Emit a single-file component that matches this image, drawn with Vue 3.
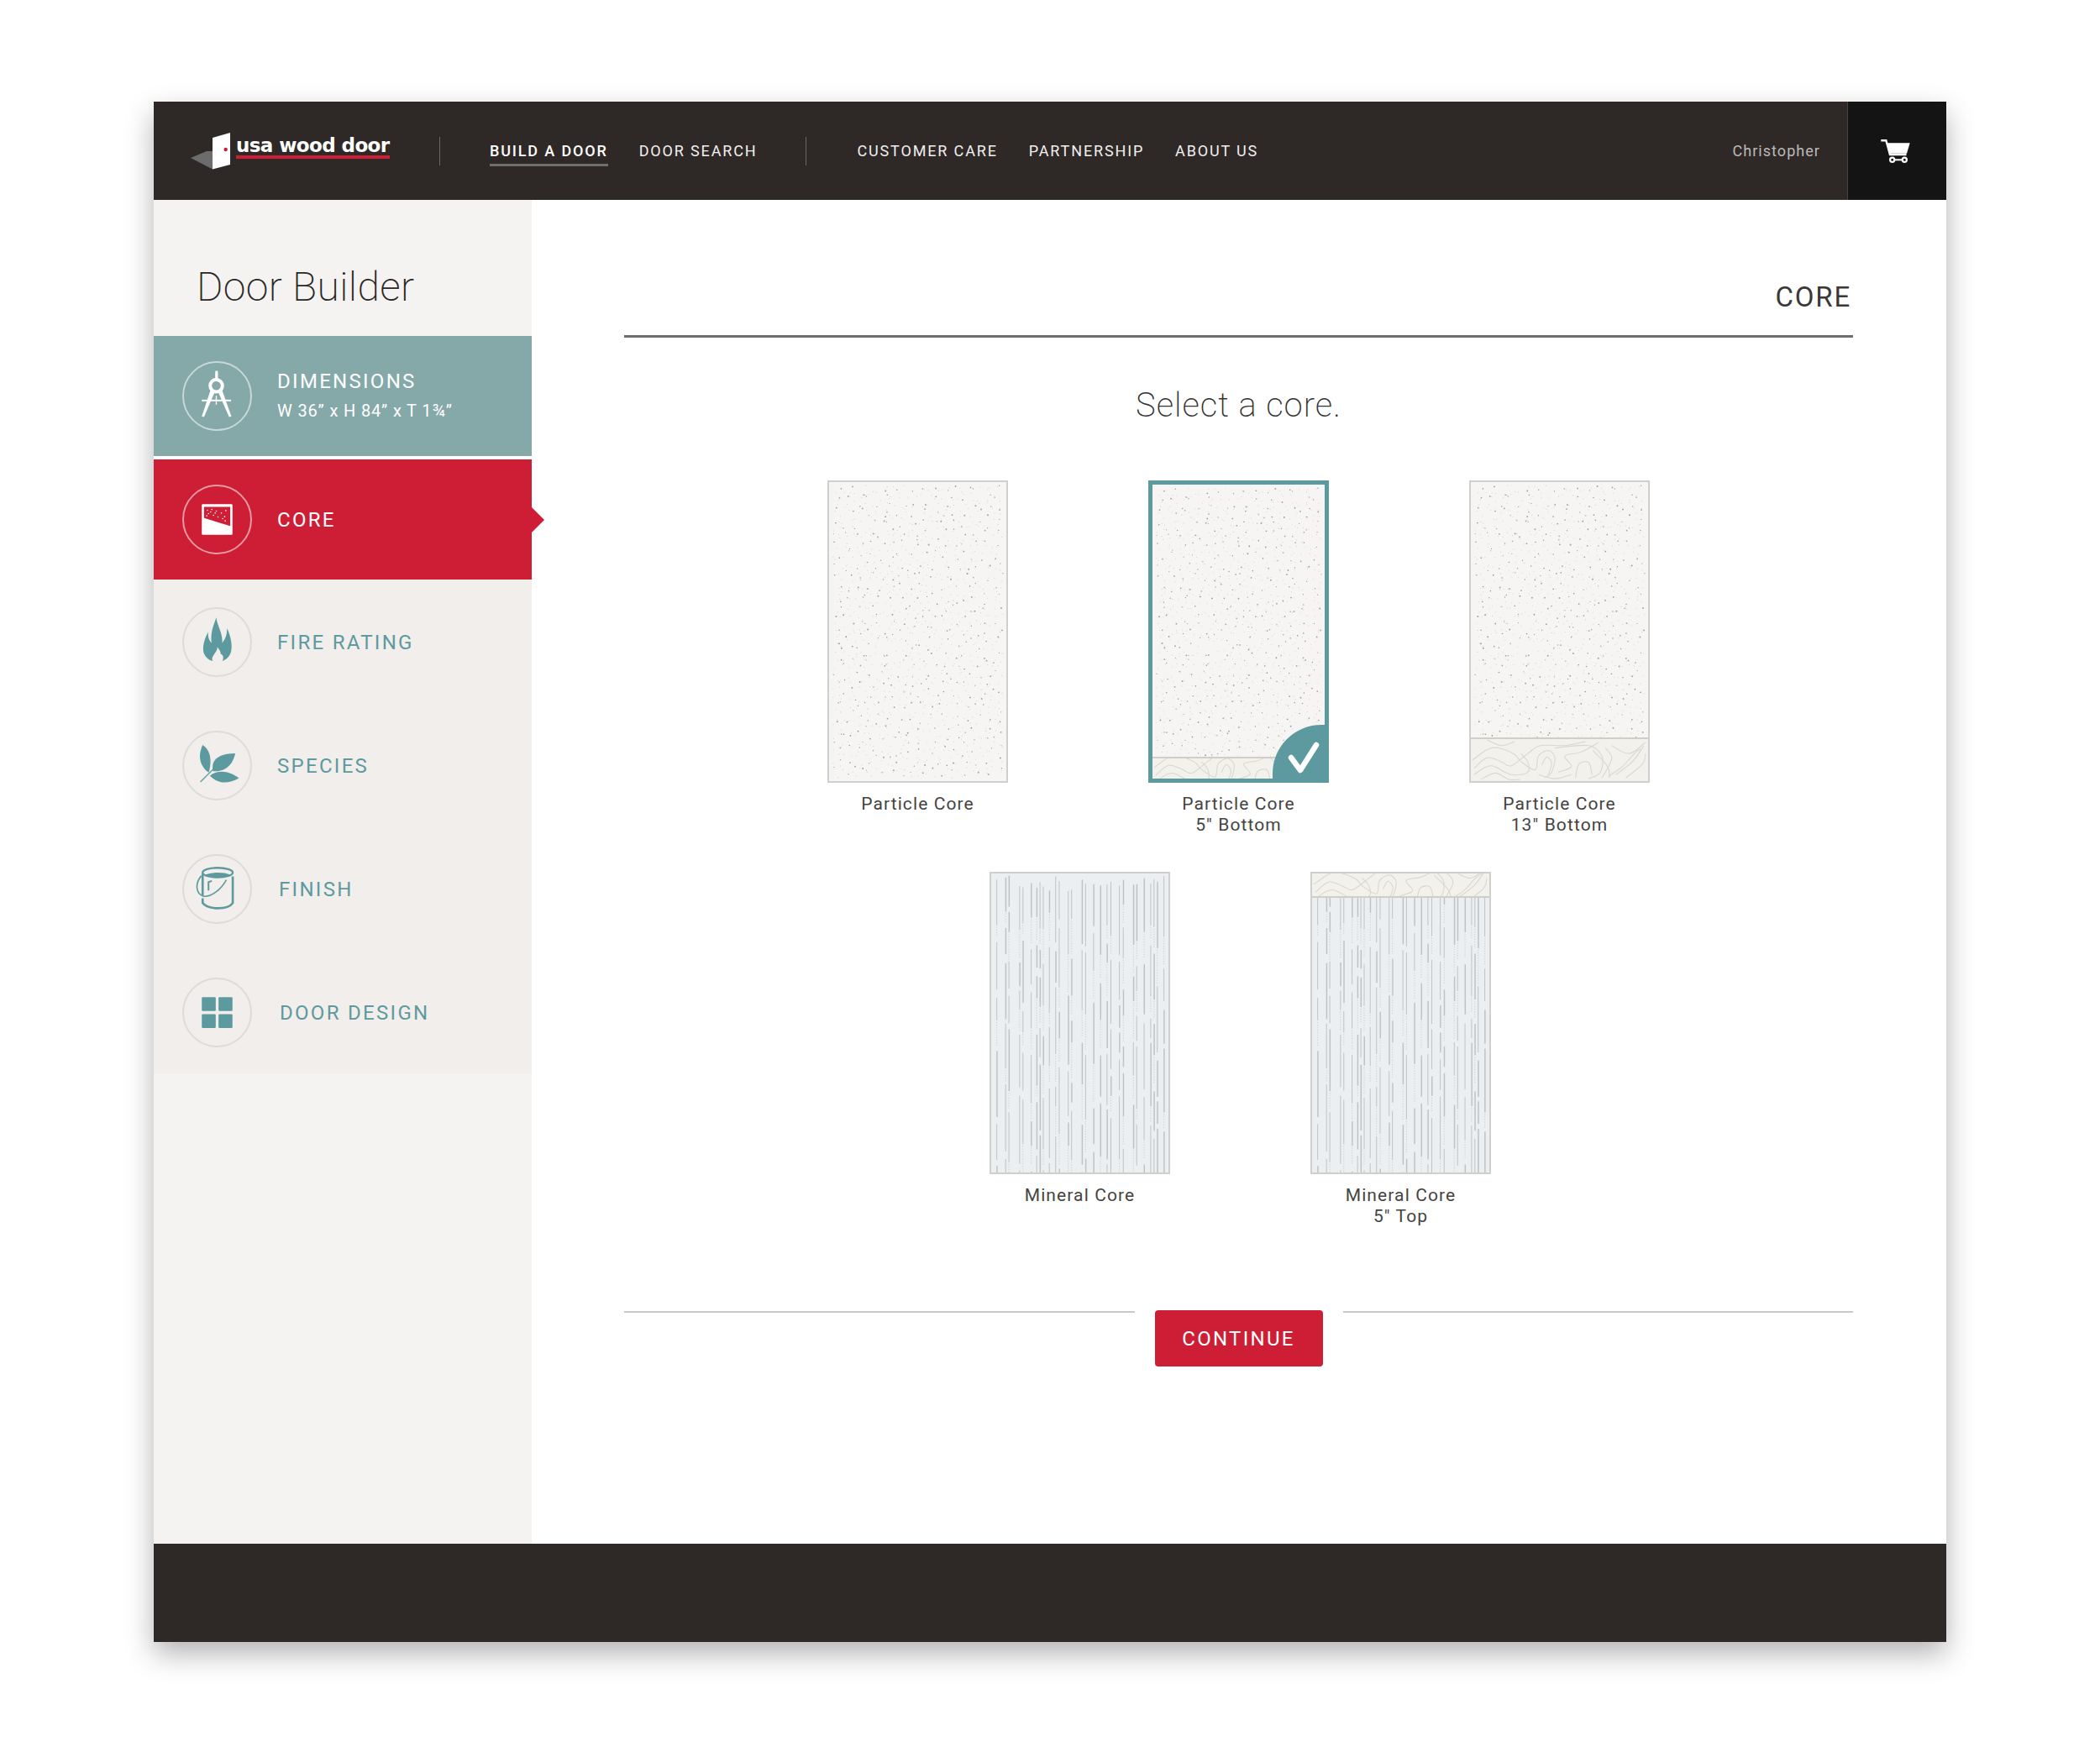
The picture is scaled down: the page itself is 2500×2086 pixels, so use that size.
<script setup>
function rng(seed) {
  let s = seed
  return () => {
    s = (s * 1664525 + 1013904223) % 4294967296
    return s / 4294967296
  }
}

function scatter(r, cols, rowsCount) {
  const out = []
  const cw = 207 / cols
  const ch = 352 / rowsCount
  for (let a = 0; a < cols; a++) {
    for (let b = 0; b < rowsCount; b++) {
      r()
      const jx = r()
      r()
      const jy = r()
      out.push({ x: 4 + (a + jx) * cw, y: 4 + (b + jy) * ch, r: 0.6 + r() * 0.4 })
    }
  }
  return out
}

const speckle = (() => {
  const r = rng(17)
  return { big: scatter(r, 16, 27), small: scatter(r, 24, 36) }
})()

const mineralColumns = [6.3, 17, 21, 34, 38, 48, 54.7, 58.7, 62.7, 70, 77.7, 82, 93, 97, 109.7, 114, 123.7, 132, 140, 144.7, 155, 159.7, 172, 176, 185, 193, 197, 201, 209]

const mineral = (() => {
  const r = rng(91)
  const solid = []
  const dots = []
  for (const x of mineralColumns) {
    let y = 2 + r() * 20
    while (y < 360) {
      const h = 22 + r() * 62
      solid.push({ x, y, h, w: r() > 0.5 ? 1.5 : 1 })
      y += h + 2
      const run = r() < 0.55 ? 10 + r() * 34 : 0
      for (let d = 0; d < run; d += 3) dots.push({ x, y: y + d })
      y += run + 3 + r() * 6
    }
  }
  return { solid, dots }
})()

function smooth(points) {
  let d = `M${points[0][0]} ${points[0][1]}`
  for (let i = 0; i < points.length - 1; i++) {
    const p0 = points[i - 1] || points[i]
    const p1 = points[i]
    const p2 = points[i + 1]
    const p3 = points[i + 2] || p2
    const c1x = p1[0] + (p2[0] - p0[0]) / 6
    const c1y = p1[1] + (p2[1] - p0[1]) / 6
    const c2x = p2[0] - (p3[0] - p1[0]) / 6
    const c2y = p2[1] - (p3[1] - p1[1]) / 6
    d += `C${c1x.toFixed(1)} ${c1y.toFixed(1)} ${c2x.toFixed(1)} ${c2y.toFixed(1)} ${p2[0]} ${p2[1]}`
  }
  return d
}

const contourPoints = [
  [[2, 26], [20, 13], [33, 11], [53, 19], [61, 28], [78, 38], [82, 21], [94, 14], [102, 23], [98, 41], [90, 48]],
  [[4, 36], [20, 23], [37, 28], [49, 33], [69, 18], [84, 8], [114, 8], [139, 3]],
  [[4, 44], [24, 33], [49, 44], [69, 41], [69, 28], [61, 18]],
  [[20, 1], [37, 8], [53, 3]],
  [[127, 48], [131, 31], [143, 29], [147, 44]],
  [[102, 11], [143, 8], [159, 21], [157, 41], [143, 49]],
  [[163, 11], [171, 24], [159, 48]],
  [[176, 44], [196, 28], [210, 8]],
  [[188, 48], [208, 31], [212, 18]],
  [[171, 8], [192, 18], [212, 4]],
  [[106, 41], [122, 34], [114, 21], [134, 16], [155, 4]],
  [[82, 44], [102, 49], [122, 44]],
  [[12, 50], [30, 42], [46, 50], [60, 50]],
  [[167, 46], [184, 34], [198, 18], [206, 12]],
  [[86, 32], [92, 22], [98, 30], [94, 44]],
  [[148, 14], [166, 34], [168, 48]],
]
const contours = contourPoints.map(smooth)

const rows = [
  [
    { id: 1, kind: 'particle', strip: 0, lines: ['Particle Core'] },
    { id: 2, kind: 'particle', strip: 26, stripY: 14, stripBottom: true, selected: true, lines: ['Particle Core', '5" Bottom'] },
    { id: 3, kind: 'particle', strip: 52, stripY: 0, stripBottom: true, lines: ['Particle Core', '13" Bottom'] },
  ],
  [
    { id: 4, kind: 'mineral', strip: 0, lines: ['Mineral Core'] },
    { id: 5, kind: 'mineral', strip: 29, stripY: 12, stripBottom: false, lines: ['Mineral Core', '5" Top'] },
  ],
]

const coreDots = [[200, 622], [216, 619], [232, 625], [250, 632], [266, 623], [204, 634], [222, 640], [238, 646], [262, 645], [212, 628], [198, 642], [255, 652], [264, 660], [228, 632]]
</script>

<template>
  <div class="page">
    <div class="window">
      <header class="topbar">
        <a class="logo">
          <svg class="logo-mark" width="48" height="44" viewBox="0 0 48 44">
            <polygon points="0,30 19,22 26,22 26,43.500" fill="#6c6c6c" />
            <polygon points="26,6 47,0 47,38 26,43.500" fill="#fff" />
            <circle cx="41.700" cy="20" r="2.200" fill="#ce1e35" />
          </svg>
          <span class="logo-word">usa wood door</span>
        </a>
        <span class="divider first"></span>
        <nav class="nav-group primary">
          <a class="nav-link active">BUILD A DOOR</a>
          <a class="nav-link">DOOR SEARCH</a>
        </nav>
        <span class="divider second"></span>
        <nav class="nav-group">
          <a class="nav-link">CUSTOMER CARE</a>
          <a class="nav-link">PARTNERSHIP</a>
          <a class="nav-link">ABOUT US</a>
        </nav>
        <span class="user">Christopher</span>
        <div class="cart">
          <svg width="40" height="30" viewBox="0 0 40 30">
            <path d="M2.300 2.200H8.300L13 19H32.500" fill="none" stroke="#fff" stroke-width="2.400" />
            <polygon points="9,5.300 36.700,5.300 33,17.700 11.700,17.700" fill="#fff" />
            <path d="M15.700 25.300H30.300" stroke="#fff" stroke-width="2" />
            <circle cx="15.700" cy="25.300" r="2.600" fill="#141414" stroke="#fff" stroke-width="2.200" />
            <circle cx="30.300" cy="25.300" r="2.600" fill="#141414" stroke="#fff" stroke-width="2.200" />
          </svg>
        </div>
      </header>

      <div class="body">
        <aside class="sidebar">
          <h1 class="side-title">Door Builder</h1>
          <ul class="steps">
            <li class="step done">
              <span class="disc">
                <svg viewBox="110 90 250 250" class="disc-icon">
                  <rect x="228" y="125" width="10" height="34" rx="4" fill="#fff" />
                  <circle cx="232" cy="178" r="22" fill="none" stroke="#fff" stroke-width="12" />
                  <polygon points="212,192 227,199 188,290 180,288" fill="#fff" />
                  <polygon points="252,192 238,199 278,290 286,288" fill="#fff" />
                  <rect x="180" y="228" width="105" height="6" fill="#fff" />
                  <rect x="230" y="214" width="4" height="32" fill="#fff" />
                </svg>
              </span>
              <div class="step-text">
                <span class="step-name">DIMENSIONS</span>
                <span class="step-sub">W 36” x H 84” x T 1¾”</span>
              </div>
            </li>
            <li class="step current">
              <span class="disc">
                <svg viewBox="110 530 250 250" class="disc-icon">
                  <rect x="180" y="600" width="110" height="110" rx="4" fill="#fff" />
                  <polygon points="188,610 282,610 282,678 188,650" fill="#ce1e35" />
                  <circle v-for="(d, i) in coreDots" :key="i" :cx="d[0]" :cy="d[1]" r="2.500" fill="#fff" />
                </svg>
              </span>
              <div class="step-text"><span class="step-name">CORE</span></div>
            </li>
            <li class="step idle">
              <span class="disc">
                <svg viewBox="110 970 250 250" class="disc-icon">
                  <path d="M232 1007C236 1040 256 1062 253 1098 264 1086 272 1066 270 1045 286 1075 291 1115 283 1135 277 1150 266 1158 254 1163 260 1150 256 1140 248 1138 248 1128 242 1122 236 1112 236 1128 224 1135 219 1148 216 1154 217 1160 220 1163 204 1160 190 1148 186 1130 182 1110 190 1082 203 1058 201 1076 206 1090 215 1098 210 1060 222 1035 232 1007Z" fill="#5d9a9f" />
                </svg>
              </span>
              <div class="step-text"><span class="step-name">FIRE RATING</span></div>
            </li>
            <li class="step idle">
              <span class="disc">
                <svg viewBox="110 150 250 250" class="disc-icon">
                  <path d="M183 201C205 215 220 245 205 300 182 285 160 250 183 201Z" fill="#5d9a9f" />
                  <path d="M300 231C292 268 268 298 220 295 212 255 238 232 300 231Z" fill="#5d9a9f" />
                  <path d="M209 312C240 285 285 298 313 320 275 342 240 342 209 312Z" fill="#5d9a9f" />
                  <path d="M175 334L237 272" stroke="#5d9a9f" stroke-width="4" fill="none" />
                </svg>
              </span>
              <div class="step-text"><span class="step-name">SPECIES</span></div>
            </li>
            <li class="step idle">
              <span class="disc">
                <svg viewBox="110 590 250 250" class="disc-icon">
                  <ellipse cx="237" cy="656" rx="54" ry="17" fill="none" stroke="#5d9a9f" stroke-width="7" />
                  <path d="M192 664C215 654 262 654 282 664 262 676 212 676 192 664Z" fill="#5d9a9f" />
                  <path d="M183 660V738M183 748V765C200 790 275 790 291 765V670" fill="none" stroke="#5d9a9f" stroke-width="8" />
                  <path d="M178 668C155 695 158 732 186 741 215 745 250 715 268 682" fill="none" stroke="#5d9a9f" stroke-width="5" />
                  <path d="M204 720V690L216 686" fill="none" stroke="#5d9a9f" stroke-width="6" />
                </svg>
              </span>
              <div class="step-text offset-a"><span class="step-name">FINISH</span></div>
            </li>
            <li class="step idle">
              <span class="disc">
                <svg viewBox="110 1030 250 250" class="disc-icon">
                  <rect x="180" y="1100" width="50" height="50" rx="4" fill="#5d9a9f" />
                  <rect x="240" y="1100" width="50" height="50" rx="4" fill="#5d9a9f" />
                  <rect x="180" y="1161" width="50" height="50" rx="4" fill="#5d9a9f" />
                  <rect x="240" y="1161" width="50" height="50" rx="4" fill="#5d9a9f" />
                </svg>
              </span>
              <div class="step-text offset-b"><span class="step-name">DOOR DESIGN</span></div>
            </li>
          </ul>
        </aside>

        <main class="content">
          <div class="heading"><h2>CORE</h2></div>
          <p class="prompt">Select a core.</p>
          <div class="choices">
            <div v-for="(row, ri) in rows" :key="ri" class="choice-row" :class="{ lower: ri === 1 }">
              <div v-for="c in row" :key="c.id" class="choice">
                <div class="swatch" :class="[c.kind, { selected: c.selected }]">
                  <svg class="texture" viewBox="0 0 215 360" preserveAspectRatio="none">
                    <template v-if="c.kind === 'particle'">
                      <circle v-for="(d, i) in speckle.small" :key="'s' + i" :cx="d.x" :cy="d.y" r="0.550" fill="#cfcfcd" />
                      <circle v-for="(d, i) in speckle.big" :key="'b' + i" :cx="d.x" :cy="d.y" :r="d.r" fill="#a0a0a0" />
                    </template>
                    <template v-else>
                      <rect v-for="(d, i) in mineral.dots" :key="'d' + i" :x="d.x" :y="d.y" width="1" height="1.400" fill="#cdd0d2" />
                      <rect v-for="(d, i) in mineral.solid" :key="'m' + i" :x="d.x" :y="d.y" :width="d.w" :height="d.h" fill="#bfc2c4" />
                    </template>
                  </svg>
                  <div v-if="c.strip" class="strip" :class="c.stripBottom ? 'at-bottom' : 'at-top'" :style="{ height: c.strip + 'px' }">
                    <svg class="topo" :viewBox="`0 ${c.stripY} 215 ${c.strip}`" preserveAspectRatio="none">
                      <path v-for="(p, i) in contours" :key="i" :d="p" fill="none" stroke="#d8d7d0" stroke-width="1.100" />
                    </svg>
                  </div>
                  <div v-if="c.selected" class="badge">
                    <svg width="62" height="64" viewBox="0 0 62 64">
                      <path d="M22 39L33 54 52 24" fill="none" stroke="#fff" stroke-width="6.500" stroke-linecap="round" stroke-linejoin="round" />
                    </svg>
                  </div>
                </div>
                <div class="choice-label">
                  <span v-for="l in c.lines" :key="l">{{ l }}</span>
                </div>
              </div>
            </div>
          </div>
          <div class="actions">
            <span class="rule"></span>
            <button class="continue" type="button">CONTINUE</button>
            <span class="rule"></span>
          </div>
        </main>
      </div>

      <footer class="footer"></footer>
    </div>
  </div>
</template>

<style scoped>
.page {
  width: 2500px;
  height: 2086px;
  padding: 121px 183px 0;
  box-sizing: border-box;
  background: #fff;
  font-family: Roboto, "Liberation Sans", sans-serif;
}
.window {
  width: 2134px;
  height: 1834px;
  display: flex;
  flex-direction: column;
  box-shadow: 0 14px 32px rgba(0, 0, 0, 0.3);
  background: #fff;
}
.topbar {
  height: 117px;
  flex: none;
  background: #2e2926;
  display: flex;
  align-items: center;
  color: #fff;
}
.logo {
  display: block;
  margin-left: 44px;
  width: 296px;
  height: 44px;
  position: relative;
}
.logo-mark { display: block; }
.logo-word {
  position: absolute;
  left: 54px;
  top: 4px;
  font-family: "DejaVu Sans", "Liberation Sans", sans-serif;
  font-weight: 700;
  font-size: 23px;
  line-height: 23px;
  letter-spacing: -0.6px;
  white-space: nowrap;
  border-bottom: 4px solid #ce1e35;
  color: #fff;
}
.divider {
  width: 1px;
  height: 34px;
  background: #6b6764;
  flex: none;
}
.divider.first { margin-right: 59px; }
.divider.second { margin: 0 60px 0 58px; }
.nav-group {
  display: flex;
  gap: 37px;
}
.nav-link {
  font-size: 18px;
  letter-spacing: 1.85px;
  line-height: 22px;
  white-space: nowrap;
  color: #f1f0ee;
  position: relative;
}
.nav-link.active { font-weight: 500; color: #fff; }
.nav-link.active::after {
  content: "";
  position: absolute;
  left: 0;
  right: 0;
  bottom: -7px;
  height: 3px;
  background: #6f6f6f;
}
.user {
  margin-left: auto;
  margin-right: 32px;
  font-size: 18px;
  letter-spacing: 1.05px;
  color: #bbb9b7;
}
.cart {
  width: 118px;
  height: 117px;
  flex: none;
  background: #141414;
  border-left: 1px solid #45413e;
  box-sizing: border-box;
  display: flex;
  align-items: center;
  justify-content: center;
  padding-right: 4px;
}

.body {
  flex: 1;
  display: flex;
  min-height: 0;
}
.sidebar {
  width: 450px;
  flex: none;
  background: #f4f3f1;
}
.side-title {
  margin: 0;
  height: 162px;
  box-sizing: border-box;
  padding: 76px 0 0 51px;
  font-size: 48px;
  line-height: 56px;
  font-weight: 200;
  letter-spacing: 0.35px;
  color: #2a2725;
}
.steps {
  list-style: none;
  margin: 0;
  padding: 0;
  background: #f1eeeb;
}
.step {
  height: 147px;
  display: flex;
  align-items: center;
  padding-left: 34px;
  box-sizing: border-box;
  gap: 30px;
  color: #5d9a9f;
  position: relative;
}
.step.idle { padding-top: 2px; }
.step.done {
  background: #85a8a9;
  color: #fff;
  height: 143px;
  margin-bottom: 4px;
  box-shadow: 0 4px 0 #fff;
}
.step.current {
  background: #ce1e35;
  color: #fff;
  height: 143px;
}
.step.current::after {
  content: "";
  position: absolute;
  left: 100%;
  top: 50%;
  margin-top: -15px;
  border-left: 15px solid #ce1e35;
  border-top: 15px solid transparent;
  border-bottom: 15px solid transparent;
}
.disc {
  width: 83px;
  height: 83px;
  border-radius: 50%;
  border: 2px solid #dcdcda;
  box-sizing: border-box;
  flex: none;
  position: relative;
}
.done .disc, .current .disc { border-color: rgba(255, 255, 255, 0.55); }
.disc-icon {
  position: absolute;
  left: -2px;
  top: -2px;
  width: 83px;
  height: 83px;
}
.step-text {
  display: flex;
  flex-direction: column;
}
.offset-a { margin-left: 2px; }
.offset-b { margin-left: 3px; }
.step-name {
  font-size: 24px;
  line-height: 30px;
  letter-spacing: 2.3px;
  white-space: nowrap;
}
.step-sub {
  margin-top: 5px;
  font-size: 20px;
  line-height: 30px;
  letter-spacing: 0.85px;
  white-space: nowrap;
}

.content {
  flex: 1;
  min-width: 0;
  padding: 0 111px 0 110px;
  display: flex;
  flex-direction: column;
}
.heading {
  height: 164px;
  flex: none;
  box-sizing: border-box;
  border-bottom: 3px solid #6d6d6d;
  display: flex;
  justify-content: flex-end;
  align-items: flex-end;
  padding: 0 2px 25px 0;
}
.heading h2 {
  margin: 0;
  font-size: 33px;
  line-height: 40px;
  font-weight: 400;
  letter-spacing: 1.8px;
  color: #3b3836;
}
.prompt {
  margin: 0;
  padding-top: 57px;
  text-align: center;
  font-size: 40px;
  line-height: 48px;
  font-weight: 200;
  letter-spacing: 0.95px;
  color: #333;
}
.choices {
  margin-top: 65px;
  display: flex;
  flex-direction: column;
  gap: 43px;
}
.choice-row {
  display: flex;
  justify-content: center;
  height: 423px;
}
.choice-row.lower { padding-left: 4px; }
.choice {
  width: 382px;
  display: flex;
  flex-direction: column;
  align-items: center;
}
.swatch {
  width: 215px;
  height: 360px;
  box-sizing: border-box;
  position: relative;
  border: 2px solid #cfcfcc;
  overflow: hidden;
  flex: none;
}
.swatch.particle { background: #f6f5f3; }
.swatch.mineral { background: #eceff1; }
.swatch.selected { border: 5px solid #5d9a9f; }
.texture {
  position: absolute;
  inset: 0;
  width: 100%;
  height: 100%;
}
.strip {
  position: absolute;
  left: 0;
  right: 0;
  background: #f2f1ec;
  box-sizing: border-box;
}
.strip.at-bottom { bottom: 0; border-top: 2px solid #cfcfc8; }
.strip.at-top { top: 0; border-bottom: 2px solid #cfcfc8; }
.topo {
  display: block;
  width: 100%;
  height: 100%;
}
.badge {
  position: absolute;
  right: 0;
  bottom: 0;
  width: 62px;
  height: 64px;
  background: #5d9a9f;
  border-top-left-radius: 58px;
}
.badge svg { display: block; }
.choice-label {
  margin-top: 13px;
  display: flex;
  flex-direction: column;
  align-items: center;
  font-size: 21px;
  line-height: 25px;
  letter-spacing: 1.1px;
  color: #454341;
  white-space: nowrap;
}
.actions {
  margin-top: 99px;
  display: flex;
  align-items: flex-start;
  gap: 24px;
}
.rule {
  flex: 1;
  height: 2px;
  margin-top: 1px;
  background: #c9c9c9;
}
.continue {
  width: 200px;
  height: 67px;
  border: 0;
  border-radius: 4px;
  background: #ce1e35;
  color: #fff;
  font-family: Roboto, "Liberation Sans", sans-serif;
  font-size: 24px;
  letter-spacing: 2.3px;
  padding: 0;
  flex: none;
}
.footer {
  height: 117px;
  flex: none;
  background: #2e2926;
}
</style>
